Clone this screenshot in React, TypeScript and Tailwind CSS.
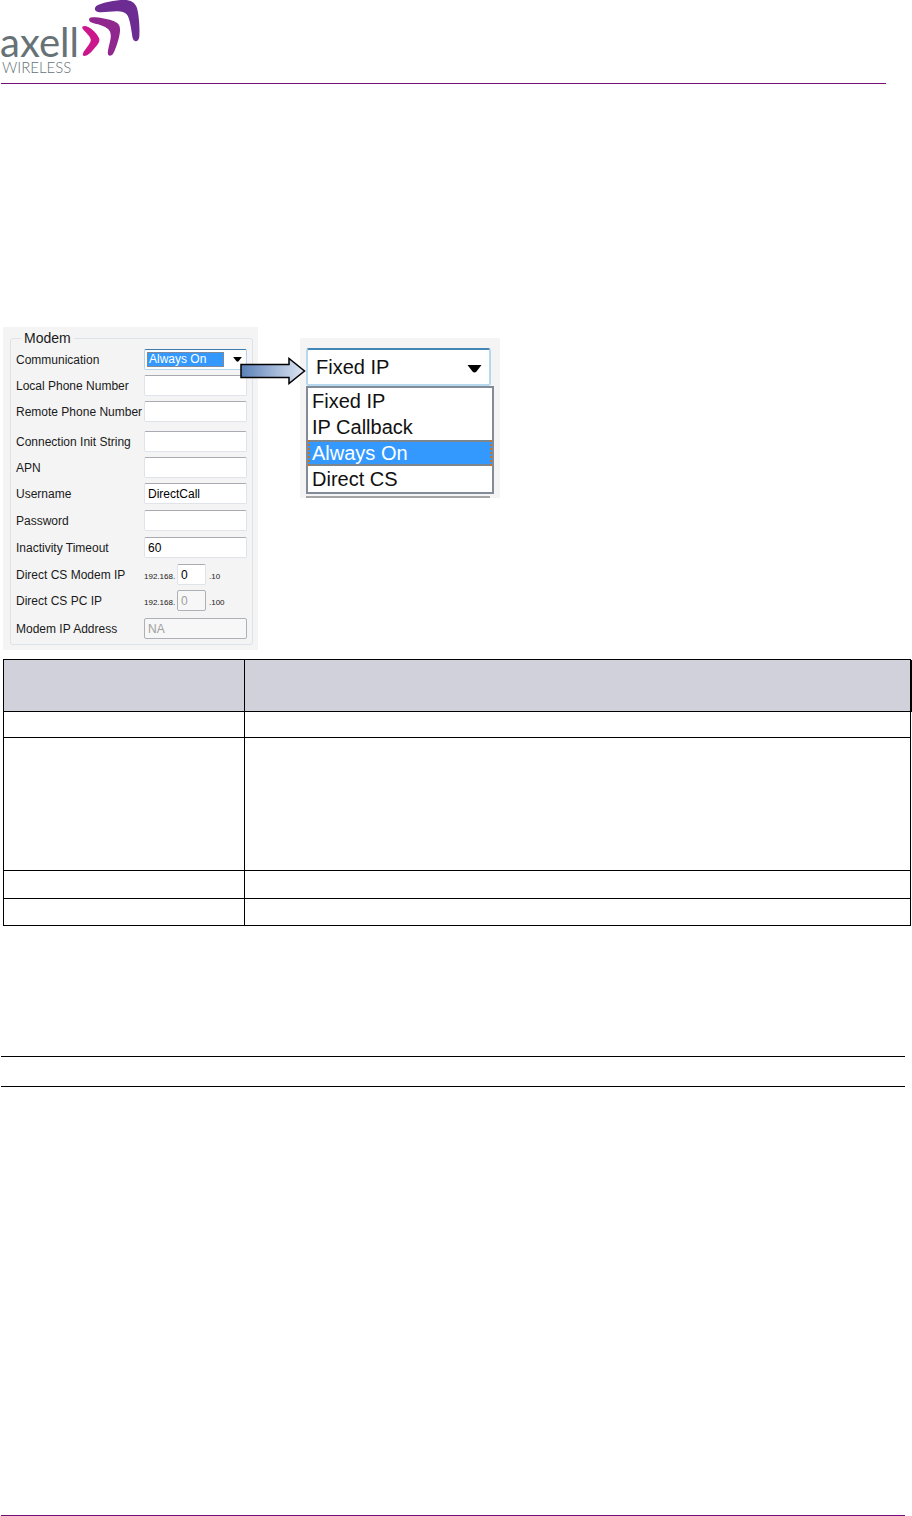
import { useState } from 'react';
import clsx from 'clsx';

const modes = ['Fixed IP', 'IP Callback', 'Always On', 'Direct CS'];

const textFields = [
  { id: 'local-phone', label: 'Local Phone Number', value: '', gap: 'mt-[5px]' },
  { id: 'remote-phone', label: 'Remote Phone Number', value: '', gap: 'mt-[5px]' },
  { id: 'init-string', label: 'Connection Init String', value: '', gap: 'mt-[9px]' },
  { id: 'apn', label: 'APN', value: '', gap: 'mt-[5px]' },
  { id: 'username', label: 'Username', value: 'DirectCall', gap: 'mt-[5px]' },
  { id: 'password', label: 'Password', value: '', gap: 'mt-[6px]' },
  { id: 'timeout', label: 'Inactivity Timeout', value: '60', gap: 'mt-[6px]' },
];

const ipFields = [
  { id: 'modem-ip', label: 'Direct CS Modem IP', suffix: '.10', disabled: false, gap: 'mt-[6px]' },
  { id: 'pc-ip', label: 'Direct CS PC IP', suffix: '.100', disabled: true, gap: 'mt-[5px]' },
];

const tableRows = ['h-[26px]', 'h-[133px]', 'h-[28px]', 'h-[27px]'];

const inputClass =
  'h-[21px] rounded-[2px] border border-[#e0e4ea] border-t-[#a9abb0] bg-white px-[3px] text-xs text-black outline-none disabled:border-[#adb0b5] disabled:bg-[#f7f7f7] disabled:text-[#a0a0a0]';

function Logo() {
  return (
    <svg width="142" height="76" viewBox="0 0 142 76" role="img" aria-label="axell wireless">
      <g fill="#667276" fontFamily="Lato, sans-serif">
        <text x="0" y="57" fontSize="40">axell</text>
        <text x="2" y="73" fontSize="15" fontWeight="300">WIRELESS</text>
      </g>
      <path
        fill="#cb168c"
        d="M82.500 26.500C85 25 88.500 26.500 92 29.500C95.500 32.500 98.500 36 99.300 39C100 42.500 96.500 46 93 50C90 53.500 87 56 84.500 56C82 56 82.500 53 85 50C87.500 46.500 90.800 42.500 90.800 40C90.800 37.500 87.500 34 85 31.500C83 29.500 81.500 27.500 82.500 26.500Z"
      />
      <path
        fill="#8f278e"
        d="M91 17.500C94 16.500 105 18 112 20.500C118 22.500 120.500 25 120 31C119.500 38 116 48 113.500 53C111.500 57 107.500 56.500 107.800 52.500C108.200 48 110.800 40 110.800 36C110.800 31 108.500 28.500 104 26.500C99 24 93 23.500 90.500 22C88.500 20.500 88.500 18 91 17.500Z"
      />
      <path
        fill="#6c2c91"
        d="M97 5.500C102 2.500 115 0 124 0C131 0 135 2.500 137 8C139 15 140 29 139.300 37C138.500 42.500 133.500 42.500 132.500 37.500C131.500 31 130.500 23 128.500 17.500C127 13.500 124 11.500 118 11.300C111 11 103 13 98 12C94 11 94 7.500 97 5.500Z"
      />
    </svg>
  );
}

function Caret({ className }: { className: string }) {
  return (
    <svg viewBox="0 0 14 8" className={className} aria-hidden="true">
      <path d="M0 0H14L9 6.500Q7 8.500 5 6.500Z" fill="#000" />
    </svg>
  );
}

function ModemPanel() {
  const [mode, setMode] = useState('Always On');

  return (
    <form className="w-[255px] shrink-0 bg-[#f4f4f4] px-[7px] pt-[3px] pb-[5px] text-xs text-[#1a1a1a]">
      <fieldset className="rounded-[3px] border border-[#dde3e8] px-[5px] pb-[5px]">
        <legend className="ml-[5px] px-[3px] text-sm leading-4">Modem</legend>

        <div className="mt-[3px] flex h-[21px] items-center">
          <label htmlFor="communication" className="w-32 shrink-0 whitespace-nowrap">Communication</label>
          <div className="flex h-[21px] w-[103px] items-center justify-between rounded-[2px] border border-[#b5d4ec] border-t-[#3d7bad] bg-white pr-1 pl-[2px]">
            <select
              id="communication"
              value={mode}
              onChange={(e) => setMode(e.target.value)}
              className="h-[15px] w-[77px] appearance-none bg-[#3399ff] pl-[2px] text-xs leading-[15px] text-white outline-1 -outline-offset-1 outline-[#c87a3c] outline-dotted"
            >
              {modes.map((m) => (
                <option key={m}>{m}</option>
              ))}
            </select>
            <Caret className="h-[5px] w-[9px]" />
          </div>
        </div>

        {textFields.map((f) => (
          <div key={f.id} className={clsx('flex h-[21px] items-center', f.gap)}>
            <label htmlFor={f.id} className="w-32 shrink-0 whitespace-nowrap">{f.label}</label>
            <input id={f.id} type="text" defaultValue={f.value} className={clsx(inputClass, 'w-[103px]')} />
          </div>
        ))}

        {ipFields.map((f) => (
          <div key={f.id} className={clsx('flex h-[21px] items-center', f.gap)}>
            <label htmlFor={f.id} className="w-32 shrink-0 whitespace-nowrap">{f.label}</label>
            <span className="w-[33px] pt-[6px] text-[8px]">192.168.</span>
            <input
              id={f.id}
              type="text"
              defaultValue="0"
              disabled={f.disabled}
              className={clsx(inputClass, 'w-[29px]')}
            />
            <span className="pt-[6px] pl-[3px] text-[8px]">{f.suffix}</span>
          </div>
        ))}

        <div className="mt-[7px] flex h-[21px] items-center">
          <label htmlFor="modem-address" className="w-32 shrink-0 whitespace-nowrap">Modem IP Address</label>
          <input
            id="modem-address"
            type="text"
            defaultValue="NA"
            disabled
            className={clsx(inputClass, 'w-[103px]')}
          />
        </div>
      </fieldset>
    </form>
  );
}

function ModeDropdown() {
  const [value, setValue] = useState('Fixed IP');
  const highlighted = 'Always On';

  return (
    <div className="mt-[11px] h-40 w-[200px] bg-[#f4f4f4] pt-[10px] pl-[6px] text-xl text-[#111]">
      <div className="relative w-[185px]">
        <select
          aria-label="Communication mode"
          value={value}
          onChange={(e) => setValue(e.target.value)}
          className="block h-[38px] w-full appearance-none rounded-[3px] border-2 border-[#b5d8ee] border-t-[#4286b5] bg-white pl-2 outline-none"
        >
          {modes.map((m) => (
            <option key={m}>{m}</option>
          ))}
        </select>
        <Caret className="pointer-events-none absolute top-[17px] right-[9px] h-2 w-[15px]" />
      </div>
      <ul role="listbox" aria-label="Modes" className="w-[188px] border-2 border-[#838b98] bg-white">
        {modes.map((m) => (
          <li
            key={m}
            role="option"
            aria-selected={m === highlighted}
            className={clsx(
              'h-[26px] pl-1 leading-[26px]',
              m === highlighted && 'bg-[#3399ff] text-white outline-2 -outline-offset-2 outline-[#c8731e] outline-dotted',
            )}
          >
            {m}
          </li>
        ))}
      </ul>
      <div className="mt-[2px] h-[2px] w-[184px] bg-[#a5a5a5]" />
    </div>
  );
}

function Arrow() {
  return (
    <svg
      width="66"
      height="28"
      viewBox="0 0 66 28"
      className="absolute top-[30px] left-[237px]"
      aria-hidden="true"
    >
      <defs>
        <linearGradient id="arrow-fill" x1="0" x2="1" y1="0" y2="0">
          <stop offset="0" stopColor="#5b80b8" />
          <stop offset="1" stopColor="#dfe7f3" />
        </linearGradient>
      </defs>
      <path
        d="M1 7.500H49V1.500L64.500 14L49 26.500V20.500H1Z"
        fill="url(#arrow-fill)"
        stroke="#000"
        strokeWidth="1.500"
      />
    </svg>
  );
}

export default function App() {
  return (
    <div className="flex min-h-screen flex-col bg-white font-['Liberation_Sans',Arial,sans-serif]">
      <header className="mr-[26px] ml-px flex h-[84px] border-b border-[#740f78]">
        <div className="-ml-px">
          <Logo />
        </div>
      </header>

      <main className="pt-[243px]">
        <div className="relative ml-[3px] flex items-start gap-[42px]">
          <ModemPanel />
          <ModeDropdown />
          <Arrow />
        </div>

        <div className="mt-[9px] mr-px ml-[3px] border-l border-black">
          <table className="w-full table-fixed border-separate border-spacing-0 border-t border-black">
            <colgroup>
              <col className="w-[241px]" />
              <col />
            </colgroup>
            <thead>
              <tr className="h-[52px] bg-[#d1d1db]">
                <th className="border-r border-b border-black" />
                <th className="border-r border-b border-black shadow-[1px_0_0_#000]" />
              </tr>
            </thead>
            <tbody>
              {tableRows.map((height) => (
                <tr key={height} className={height}>
                  <td className="border-r border-b border-black" />
                  <td className="border-r border-b border-black" />
                </tr>
              ))}
            </tbody>
          </table>
        </div>

        <div className="mt-[130px] mr-[7px] ml-px h-[31px] border-y border-black" />
      </main>

      <footer className="mt-auto mr-[7px] ml-px border-t border-[#740f78]" />
    </div>
  );
}
